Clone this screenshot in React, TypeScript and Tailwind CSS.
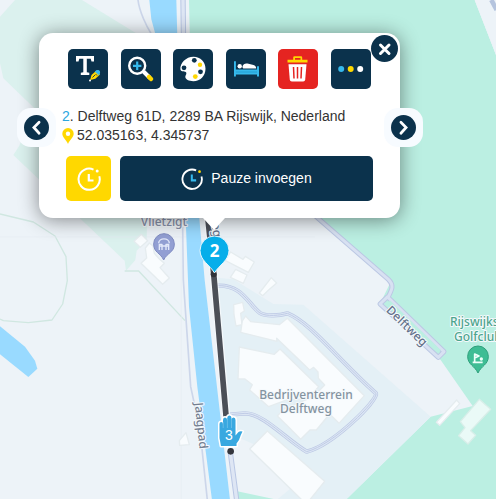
import React from 'react';

const NAVY = '#0b324c';
const BLUE = '#36b9ec';
const YELLOW = '#ffd800';

function TextEditIcon() {
  return (
    <svg viewBox="0 0 40 40" className="size-full" aria-hidden="true">
      <path d="M8 7H26V12.500H23.500L22.700 9.800H18.800V23.200L21.300 23.700V26H12.800V23.700L15.300 23.200V9.800H11.300L10.500 12.500H8Z" fill="#fff" />
      <path d="M22.200 31L23.500 26L28.500 21.500L32 25.500L27.300 29.800Z" fill={YELLOW} />
      <path d="M26.800 22.800C28 20.600 31 20.300 32 22.500C32.300 24 31.800 25.200 30.800 26.200Z" fill={BLUE} />
      <path d="M24.500 28.500L27 26M27.500 25L29 26.500" stroke={NAVY} strokeWidth="0.9" />
      <circle cx="22" cy="31.400" r="1" fill="#fff" />
    </svg>
  );
}

function ZoomIcon() {
  return (
    <svg viewBox="0 0 40 40" className="size-full" fill="none" aria-hidden="true">
      <path d="M22.500 22.500L29 29" stroke="#fff" strokeWidth="4" />
      <path d="M28 28L30 30" stroke={YELLOW} strokeWidth="4.500" strokeLinecap="round" />
      <circle cx="16.200" cy="16.800" r="8" stroke="#fff" strokeWidth="2.400" />
      <path d="M16.200 12.600V21M12 16.800H20.400" stroke={BLUE} strokeWidth="2.200" />
    </svg>
  );
}

function PaletteIcon() {
  return (
    <svg viewBox="0 0 40 40" className="size-full" aria-hidden="true">
      <path d="M20.500 7.800C27.500 7.800 32.500 13.200 32.500 19.800C32.500 27 27.300 32.200 20.300 32.200C15.800 32.200 12.300 30.600 12.300 27.800C12.300 26.100 13.900 25.200 13.200 23.500C12.400 21.700 8.300 23.800 7.400 20.600C6.600 14.300 13 7.800 20.500 7.800Z" fill="#fff" />
      <circle cx="21.300" cy="11.300" r="2.400" fill={NAVY} />
      <circle cx="11" cy="18.800" r="2.400" fill={NAVY} />
      <circle cx="27.500" cy="22.800" r="2.400" fill={NAVY} />
      <circle cx="27" cy="15.800" r="2.200" fill={YELLOW} />
      <circle cx="22.300" cy="27.600" r="2.400" fill={YELLOW} />
    </svg>
  );
}

function BedIcon() {
  return (
    <svg viewBox="0 0 40 40" className="size-full" aria-hidden="true">
      <path d="M8 12.300H9.900V20.600H31V17.300H33V27.500H31V25.500H9.900V27.500H8Z" fill={BLUE} />
      <path d="M9.900 23H31" stroke="#2098cb" strokeWidth="0.800" />
      <circle cx="13.700" cy="17.300" r="2.200" fill="#fff" />
      <path d="M16.500 17.600C17 15 19.500 14 21.500 14.600L27.500 16.100C29.200 16.600 30.200 17.900 30.200 19.400H17.300C16.600 19 16.300 18.300 16.500 17.600Z" fill="#fff" />
    </svg>
  );
}

function TrashIcon() {
  return (
    <svg viewBox="0 0 40 40" className="size-full" aria-hidden="true">
      <path d="M9.500 10.700H15.200V8.500Q15.200 7.300 16.500 7.300H23Q24.200 7.300 24.200 8.500V10.700H29.500V13.500H9.500ZM17 10.700H22.500V9H17Z" fill={YELLOW} fillRule="evenodd" />
      <path d="M10.500 15.200H28.500L27.200 30.800Q27 32.600 25.200 32.600H13.800Q12 32.600 11.800 30.800Z" fill="#fff" />
      <path d="M15.500 18L16 29.500M19.500 18V29.500M23.500 18L23 29.500" stroke="#e52421" strokeWidth="1.500" />
    </svg>
  );
}

function DotsIcon() {
  return (
    <svg viewBox="0 0 40 40" className="size-full" aria-hidden="true">
      <circle cx="10.200" cy="20" r="3" fill={BLUE} />
      <circle cx="19.700" cy="20" r="3" fill={YELLOW} />
      <circle cx="29.200" cy="20" r="3" fill="#fff" />
    </svg>
  );
}

function ClockIcon({ hands, dot, className }: { hands: string; dot: string; className: string }) {
  return (
    <svg viewBox="0 0 24 24" className={className} fill="none" aria-hidden="true">
      <path d="M16.500 2.600A10.600 10.600 0 1 0 22.300 9.200" stroke="#fff" strokeWidth="2" />
      <path d="M11.800 7V13.500H16.500" stroke={hands} strokeWidth="2.200" />
      <circle cx="20.200" cy="4" r="1.500" fill={dot} />
    </svg>
  );
}

function Chevron({ d }: { d: string }) {
  return (
    <svg viewBox="0 0 24 24" className="size-full" fill="none" aria-hidden="true">
      <path d={d} stroke="#fff" strokeWidth="2.600" strokeLinecap="round" />
    </svg>
  );
}

const tools = [
  { label: 'Tekst bewerken', icon: <TextEditIcon />, color: 'bg-[#0b324c]' },
  { label: 'Inzoomen', icon: <ZoomIcon />, color: 'bg-[#0b324c]' },
  { label: 'Kleur kiezen', icon: <PaletteIcon />, color: 'bg-[#0b324c]' },
  { label: 'Overnachting', icon: <BedIcon />, color: 'bg-[#0b324c]' },
  { label: 'Verwijderen', icon: <TrashIcon />, color: 'bg-[#e52421]' },
  { label: 'Meer', icon: <DotsIcon />, color: 'bg-[#0b324c]' },
];

// outlines are drawn on a grid three times finer than the labels
const buildings = [
  'M424 703L443 722L421 742L402 724Z',
  'M448 729L459 738L463 760L478 777L493 790L480 803L508 834L488 853L423 790L440 774L436 744Z',
  'M692 756L729 778L736 769L763 786L745 817L675 781Z',
  'M707 808L741 825L730 850L691 832Z',
  'M814 833L830 849L805 871L788 887L778 879Z',
  'M701 914L728 907L733 933L722 940L726 974L708 978L702 944Z',
  'M727 963L737 948L752 965L838 974L862 955L1093 1187L1017 1270L989 1242L949 1290L930 1290L902 1318L862 1277L832 1248L850 1228L940 1190L974 1155L955 1135L954 1116L941 1102L929 1110L830 1015L831 1024L722 997Z',
  'M718 1041L823 1063L840 1047L956 1160L925 1195L860 1200L806 1220L749 1170L757 1154L735 1137H714Z',
  'M802 1293L974 1444L929 1500H906L749 1347Z',
  'M538 1322L558 1298L568 1334L539 1336Z',
  'M1370 1200L1379 1211L1319 1276L1309 1267Z',
];

const estateRoad = 'M652 857C730 854 745 915 780 939C800 951 840 946 862 940C935 970 1010 1075 1128 1180C1135 1200 1000 1335 920 1355C860 1320 790 1240 735 1240L690 1244';
const delftweg = 'M945 647L1165 838C1184 856 1175 870 1164 892L1332 1055L1315 1072L1140 912L1164 889';
const hand = 'M221 446L219.500 438V424Q219.500 422 221.200 422Q223 422 223 424V420Q223 417.500 225 417.500Q227 417.500 227.200 420V418Q227.500 415.500 229.300 415.500Q231.500 415.500 231.500 418V419.500Q232 417.500 233.600 417.500Q235.500 417.500 235.500 420V435.500L238.500 432Q240 430.800 242.500 431.500Q240.500 435 239 440L236.500 443.500V446Z';

function MapCanvas() {
  return (
    <svg viewBox="0 0 496 499" preserveAspectRatio="xMidYMin slice" className="absolute inset-0 size-full bg-[#edf3f8]" role="img" aria-label="Kaart van Delftweg, Rijswijk">
      <g transform="scale(0.33333)" strokeLinejoin="round" fill="none">
        <path d="M0 50L45 0H246L450 125V300L440 720L410 752L406 780L378 812L374 782L40 465L58 437L102 323L10 235L0 190Z" fill="#dbf1ee" />
        <path d="M567 0H1424L1488 165V1500H1037L1292 1250L1418 1218L1322 1080L1140 912L1170 850L945 655L574 300Z" fill="#bbefe2" />
        <path d="M1424 0H1488V165Z" fill="#edf3f8" />
        <path d="M652 833L700 838L820 912L910 914L1292 1250L1037 1500H830L940 1410L720 1315L690 1240Z" fill="#e4f0f6" />
        <path d="M712 1474L835 1500H715Z" fill="#bbefe2" />
        <path d="M0 642L100 666L165 708L198 770L202 842L188 912L156 960L85 968L10 962L0 957" stroke="#d0e7e1" strokeWidth="4" />
        <path d="M374 813H416L555 962" stroke="#d0e7e1" strokeWidth="4" />
        <path d="M0 711H945M544 711V1500" stroke="#e6edf3" strokeWidth="2" />

        <path d="M448 0H529L537 300L598 655L614 840L690 1500H636L592 1160L567 920L557 655L520 300L454 58Z" fill="#99daff" />
        <path d="M0 979L75 1040L105 1082L112 1106L85 1131L0 1063Z" fill="#99daff" />

        <path d="M414 0C418 35 440 80 453 100M548 680L550 840L572 1160L600 1290L622 1500" stroke="#ccd6ea" strokeWidth="5" />
        <path d="M549 0L553 300M690 1350L710 1500" stroke="#b9c7e4" strokeWidth="16" />
        <path d="M549 0L553 300M690 1350L710 1500" stroke="#dee6f4" strokeWidth="10" />
        <path d="M1474 0L1490 30" stroke="#b5c4de" strokeWidth="14" />

        <path d={estateRoad} stroke="#bcc8e4" strokeWidth="13" />
        <path d={estateRoad} stroke="#dce6f4" strokeWidth="9" />
        <path d={estateRoad} stroke="#c0cce6" strokeWidth="3" />
        <path d={delftweg} stroke="#bcc8e4" strokeWidth="15" />
        <path d={delftweg} stroke="#d8e1f2" strokeWidth="9" />
        <path d="M1166 906L1318 1054" stroke="#bbefe2" strokeWidth="12" />

        <g fill="#f9fcfe" stroke="#e5ecef" strokeWidth="4">
          {buildings.map((d) => (
            <path key={d} d={d} />
          ))}
        </g>
        <path d="M1438 1198L1472 1228L1412 1292L1427 1306L1404 1332L1376 1307L1395 1283L1381 1265Z" fill="#eafaf7" stroke="#d8eee9" strokeWidth="4" />

        <path d="M622 640L641 820L680 1260L692 1355" stroke="#fff" strokeOpacity="0.500" strokeWidth="24" />
        <path d="M622 640L641 820L680 1270" stroke="#4b4f57" strokeWidth="17" />
        <circle cx="641" cy="823" r="9" fill="#303238" />
        <circle cx="692" cy="1354" r="10" fill="#34363d" />

        <path d="M491 780C481 758 461 758 461 732A31 31 0 0 1 523 732C523 758 501 758 491 780Z" fill="#929fd3" stroke="#7e8bc1" strokeWidth="3" />
        <path d="M476 730C476 712 508 712 508 730M478 738H507M478 750V733H486V750M498 750V733H506V750" stroke="#e3e9fa" strokeWidth="4" />
        <path d="M1434 1119C1424 1097 1403 1094 1403 1069A31 31 0 0 1 1465 1069C1465 1094 1444 1097 1434 1119Z" fill="#3fbd94" stroke="#2d9f7a" strokeWidth="3" />
        <path d="M1424 1088V1062L1437 1068L1424 1074M1418 1087H1448" stroke="#edfff9" strokeWidth="5" />
        <circle cx="1444" cy="1077" r="5" fill="#edfff9" />
      </g>

      <g className="font-['Noto_Sans',sans-serif] font-medium" fontSize="12" textAnchor="middle" stroke="#f5f9fc" strokeWidth="2" paintOrder="stroke" strokeLinejoin="round">
        <text x="164" y="226" fill="#8790a9">Vlietzigt</text>
        <text x="306" y="399" fill="#8493a0">Bedrijventerrein</text>
        <text x="306" y="413" fill="#8493a0">Delftweg</text>
        <text x="450" y="326" fill="#4da58d" textAnchor="start">Rijswijkse</text>
        <text x="454" y="341" fill="#4da58d" textAnchor="start">Golfclub</text>
        <text transform="translate(404 329) rotate(44)" fill="#63718a">Delftweg</text>
        <text transform="translate(197 426) rotate(84)" fill="#737e91">Jaagpad</text>
        <text transform="translate(210 212) rotate(82)" fill="#63718a">Delftweg</text>
      </g>

      <path d="M214.500 273C210 265 200 260.500 200 250.500A14.500 14.500 0 0 1 229 250.500C229 260.500 219 265 214.500 273Z" fill="#06aeea" stroke="#e8f7fd" />
      <text x="214.500" y="257" className="font-['Noto_Sans',sans-serif] font-bold" fontSize="17" textAnchor="middle" fill="#fff">2</text>

      <path d={hand} fill="#fff" stroke="#fff" strokeWidth="3" strokeLinejoin="round" />
      <path d={hand} fill="#38a8e0" />
      <path d="M223.200 422V428M227.400 419V428M231.500 419V428" stroke="#82caec" strokeWidth="0.600" />
      <text x="229" y="440" className="font-['Liberation_Sans',Arial,sans-serif]" fontSize="14" textAnchor="middle" fill="#fff">3</text>
    </svg>
  );
}

function StopPopup() {
  return (
    <section aria-label="Stop 2" className="relative max-w-lg rounded-[14px] bg-white pt-4 pb-[17px] text-sm leading-[19px] text-[#333333] shadow-[0_2px_20px_rgba(0,0,0,0.45)]">
      <div className="flex justify-between px-[29px]">
        {tools.map((tool) => (
          <button key={tool.label} type="button" aria-label={tool.label} className={`size-10 rounded-[5px] ${tool.color}`}>
            {tool.icon}
          </button>
        ))}
      </div>

      <div className="mt-[18px] px-[23px]">
        <p className="whitespace-nowrap">
          <span className="text-[#2da7df]">2</span>. Delftweg 61D, 2289 BA Rijswijk, Nederland
        </p>
        <p className="flex items-center gap-[3px]">
          <svg viewBox="0 0 12 16" className="h-4 w-3 shrink-0" aria-hidden="true">
            <path d="M6 16C4.500 12 0.300 9.500 0.300 5.800A5.700 5.700 0 0 1 11.700 5.800C11.700 9.500 7.500 12 6 16Z" fill={YELLOW} />
            <circle cx="6" cy="5.800" r="2.200" fill="#fff" />
          </svg>
          52.035163, 4.345737
        </p>
      </div>

      <div className="mt-[11px] flex gap-[9px] px-[27px]">
        <button type="button" aria-label="Tijd" className="flex size-[45px] shrink-0 items-center justify-center rounded-[5px] bg-[#ffd800]">
          <ClockIcon hands="#fff" dot="#fff" className="size-6" />
        </button>
        <button type="button" className="flex h-[45px] flex-1 items-center justify-center gap-2 rounded-[5px] bg-[#0b324c] text-white">
          <ClockIcon hands={BLUE} dot={YELLOW} className="size-[22px]" />
          Pauze invoegen
        </button>
      </div>

      <button type="button" aria-label="Sluiten" className="absolute top-[2px] right-[2px] size-[27px] rounded-full bg-[#0b324c]">
        <svg viewBox="0 0 27 27" className="size-full" aria-hidden="true">
          <path d="M9.500 10L18 18.500M18 10L9.500 18.500" stroke="#fff" strokeWidth="3" strokeLinecap="round" />
        </svg>
      </button>

      <div className="absolute top-[75px] -left-[22px] flex size-[39px] items-center justify-center rounded-[14px] bg-[#f7fbff]">
        <button type="button" aria-label="Vorige stop" className="size-[25px] rounded-full bg-[#0b324c]">
          <Chevron d="M14.500 7L9.500 12L14.500 17.500" />
        </button>
      </div>
      <div className="absolute top-[75px] -right-[23px] flex size-[39px] items-center justify-center rounded-[14px] bg-[#f7fbff]">
        <button type="button" aria-label="Volgende stop" className="size-[25px] rounded-full bg-[#0b324c]">
          <Chevron d="M9.500 7L14.500 12L9.500 17.500" />
        </button>
      </div>

      <svg viewBox="0 0 22 12" className="absolute top-full left-[164px] h-3 w-[22px]" aria-hidden="true">
        <path d="M0 0H22L11 12Z" fill="#fff" />
      </svg>
    </section>
  );
}

export default function App() {
  return (
    <main className="relative min-h-screen overflow-hidden pt-[33px] pr-24 pl-[39px] font-['Liberation_Sans',Arial,sans-serif]">
      <MapCanvas />
      <StopPopup />
    </main>
  );
}
